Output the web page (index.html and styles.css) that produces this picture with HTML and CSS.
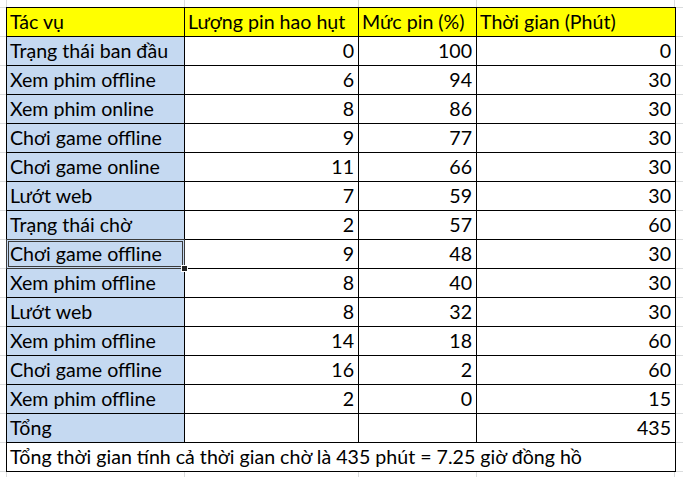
FILE: index.html
```html
<!DOCTYPE html>
<html lang="vi">
<head>
<meta charset="utf-8">
<title>Pin</title>
<link rel="stylesheet" href="styles.css">
</head>
<body>
<div class="sheet">
  <table class="grid">
    <colgroup>
      <col class="c1"><col class="c2"><col class="c3"><col class="c4">
    </colgroup>
    <tr class="head"><td>Tác vụ</td><td>Lượng pin hao hụt</td><td>Mức pin (%)</td><td>Thời gian (Phút)</td></tr>
    <tr><td class="lbl">Trạng thái ban đầu</td><td class="num">0</td><td class="num">100</td><td class="num">0</td></tr>
    <tr><td class="lbl">Xem phim offline</td><td class="num">6</td><td class="num">94</td><td class="num">30</td></tr>
    <tr><td class="lbl">Xem phim online</td><td class="num">8</td><td class="num">86</td><td class="num">30</td></tr>
    <tr><td class="lbl">Chơi game offline</td><td class="num">9</td><td class="num">77</td><td class="num">30</td></tr>
    <tr><td class="lbl">Chơi game online</td><td class="num">11</td><td class="num">66</td><td class="num">30</td></tr>
    <tr><td class="lbl">Lướt web</td><td class="num">7</td><td class="num">59</td><td class="num">30</td></tr>
    <tr><td class="lbl">Trạng thái chờ</td><td class="num">2</td><td class="num">57</td><td class="num">60</td></tr>
    <tr><td class="lbl sel">Chơi game offline<span class="handle"></span></td><td class="num">9</td><td class="num">48</td><td class="num">30</td></tr>
    <tr><td class="lbl">Xem phim offline</td><td class="num">8</td><td class="num">40</td><td class="num">30</td></tr>
    <tr><td class="lbl">Lướt web</td><td class="num">8</td><td class="num">32</td><td class="num">30</td></tr>
    <tr><td class="lbl">Xem phim offline</td><td class="num">14</td><td class="num">18</td><td class="num">60</td></tr>
    <tr><td class="lbl">Chơi game offline</td><td class="num">16</td><td class="num">2</td><td class="num">60</td></tr>
    <tr><td class="lbl">Xem phim offline</td><td class="num">2</td><td class="num">0</td><td class="num">15</td></tr>
    <tr><td class="lbl">Tổng</td><td class="num"></td><td class="num"></td><td class="num">435</td></tr>
    <tr><td colspan="4">Tổng thời gian tính cả thời gian chờ là 435 phút = 7.25 giờ đồng hồ</td></tr>
  </table>
</div>
</body>
</html>
```
FILE: styles.css
```css
html, body {
  margin: 0;
  padding: 0;
  background: #fff;
}
body {
  width: 683px;
  height: 477px;
  overflow: hidden;
  background-color: #fff;
  background-image:
    linear-gradient(to bottom, #dadcdd 1px, transparent 1px);
  background-size: 683px 29px;
  background-position: 0 7px;
}
.sheet {
  padding: 7px 0 0 6px;
  position: relative;
}
.sheet::before {
  content: "";
  position: absolute;
  inset: 0;
  pointer-events: none;
  background:
    linear-gradient(#dadcdd, #dadcdd) 6px 0 / 1px 100% no-repeat,
    linear-gradient(#dadcdd, #dadcdd) 184px 0 / 1px 100% no-repeat,
    linear-gradient(#dadcdd, #dadcdd) 358px 0 / 1px 100% no-repeat,
    linear-gradient(#dadcdd, #dadcdd) 476px 0 / 1px 100% no-repeat,
    linear-gradient(#dadcdd, #dadcdd) 674px 0 / 1px 100% no-repeat;
  height: 477px;
}
.grid {
  position: relative;
  border-collapse: collapse;
  table-layout: fixed;
  width: 669px;
  font-family: "Lato", "Open Sans", sans-serif;
  font-size: 19.6px;
  color: #000;
}
.c1 { width: 178px; }
.c2 { width: 174px; }
.c3 { width: 118px; }
.c4 { width: 199px; }
.grid td {
  height: 29px;
  padding: 0 4px 2px 3px;
  border: 1px solid #000;
  background: #fff;
  white-space: nowrap;
  vertical-align: bottom;
  line-height: 25px;
  box-sizing: border-box;
}
.head td {
  background: #ffff00;
}
.grid td.lbl {
  background: #c5d9f1;
}
.grid td.num {
  text-align: right;
}
.grid td.sel {
  position: relative;
}
.sel::after {
  content: "";
  position: absolute;
  left: -1px;
  top: -1px;
  right: -1px;
  bottom: -1px;
  border: 3px double #3a3a3a;
  pointer-events: none;
}
.handle {
  position: absolute;
  right: -4px;
  bottom: -4px;
  width: 5px;
  height: 5px;
  background: #222;
  border: 1px solid #fff;
  z-index: 2;
}
```
